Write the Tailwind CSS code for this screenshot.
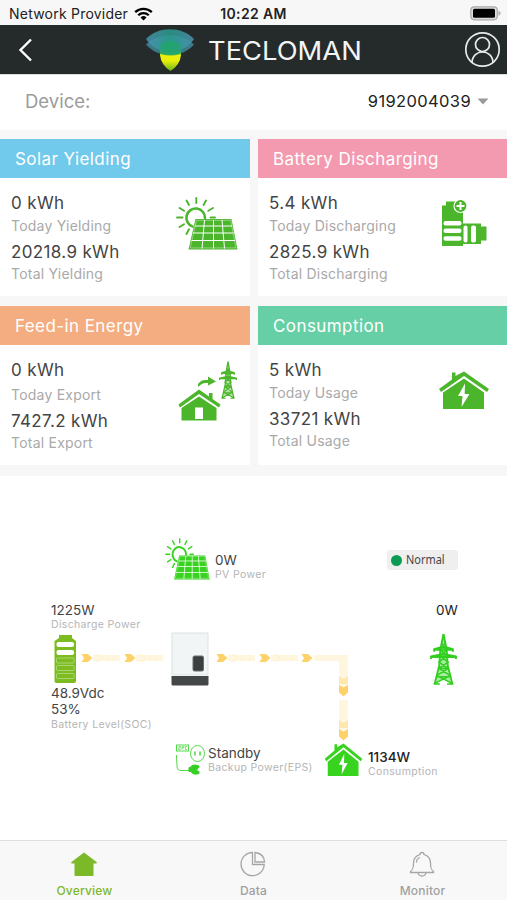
<!DOCTYPE html>
<html lang="en">
<head>
  <meta charset="UTF-8" />
  <meta name="viewport" content="width=device-width, initial-scale=1.0"/>
  <title>Tecloman Overview</title>
  <script src="https://cdn.jsdelivr.net/npm/@tailwindcss/browser@4"></script>
</head>
<body class="w-[507px] h-[900px] overflow-hidden flex flex-col bg-white font-['Inter',sans-serif] text-[#444] whitespace-nowrap">

  <!-- Shared icons -->
  <svg class="hidden">
    <symbol id="solar" viewBox="0 0 62 53" preserveAspectRatio="none">
      <g fill="none" stroke="currentColor" stroke-width="1.9" stroke-linecap="round">
        <path d="M20.300 1v5M10.500 3.500l2.500 4.500M30 3.500l-2.500 4.500M3.500 11l4.500 2.700M37 11l-4.700 2.700M1 20.500h5.500M34.500 20.500h4.500M3.500 30l4.500-2.700M10.500 37l2.500-4.700"/>
        <path d="M16.500 29.500A9.300 9.300 0 1 1 29 21" stroke-width="2.600"/>
      </g>
      <path d="M19.500 22h36l6 30.500H12.500z" fill="currentColor"/>
      <g fill="none" stroke="#fff" stroke-width="1">
        <path d="M20.500 23.300h34.200l5.200 27.600H14.200z" stroke-width=".4"/>
        <path d="M28.500 23L26 51.500M37.500 23v28.500M46 23l2.500 28.500M18.500 29h37.500M17 36h40.500M15.500 43.500H59"/>
      </g>
    </symbol>
    <symbol id="power-house" viewBox="0 0 52 38" preserveAspectRatio="none">
      <path d="M14 7V1.500h3.500V5L26 .5 51 18l-2 3L26 5 3 21l-2-3 13-9.500z" fill="currentColor"/>
      <path d="M26 7.500l20 14V38H5V21.500z" fill="currentColor"/>
      <path d="M27 12.500l-7 12.500h4.500L23.500 36 31.500 23h-4.800z" fill="#fff"/>
    </symbol>
    <symbol id="tower" viewBox="0 0 26 50" preserveAspectRatio="none">
      <path d="M13 3l-3 14v14L5.500 49l7.500-5 7.500 5L16 31V17z" fill="currentColor" opacity=".4"/>
      <g fill="none" stroke="currentColor" stroke-width="1.900" stroke-linejoin="round">
        <path d="M13 1l-3 15-1 15-4.500 18M13 1l3 15 1 15 4.500 18"/>
        <path d="M4 18v-2.500L10 14h6l6 1.500V18M1 25v-2.500L9.500 21h7l8.500 1.500V25M4 16h18M1 23h24"/>
        <path d="M11.500 10l5 6-7 6 8 6-9 6 11 7-14 7M14.500 10l-5 6 7 6-8 6 9 6-11 7 14 7M8 34h10M6 42h14M3.500 49h6M16.500 49h6" stroke-width="1.500"/>
      </g>
    </symbol>
    <symbol id="flow" viewBox="0 0 40 10">
      <path d="M12 2h27v6H12z" fill="#fff6df"/>
      <path d="M14 2h5l2 3-2 3h-5M25 2l2 3-2 3M32 2l2 3-2 3" fill="none" stroke="#fff1cf"/>
      <path d="M.5 1h6.500l4.500 4L7 9H.5L3 5z" fill="#fdd26b"/>
    </symbol>
  </svg>

  <!-- Status bar -->
  <div class="h-[25px] shrink-0 bg-[#f7f7f7] grid grid-cols-3 items-center pl-[9px] pr-[6px] pt-[2px] text-[14px] text-[#222]">
    <div class="flex items-center gap-[6px]">
      <span class="tracking-[0.22px]">Network Provider</span>
      <svg class="w-[19px] h-[14px]" viewBox="0 0 19 14" fill="none" stroke="#000" stroke-width="2.300">
        <path d="M1.200 5.200a12 12 0 0 1 16.600 0M4.200 8.300a7.600 7.600 0 0 1 10.600 0"/>
        <path d="M9.500 13.500L6.500 10.500a4.300 4.300 0 0 1 6 0z" fill="#000" stroke="none"/>
      </svg>
    </div>
    <span class="text-center font-semibold tracking-[0.35px] -ml-[3px]">10:22 AM</span>
    <svg class="justify-self-end w-[31px] h-[15px]" viewBox="0 0 31 15">
      <rect x=".8" y=".8" width="26.500" height="13" rx="3.500" fill="#ddd" stroke="#aaa" stroke-width="1.200"/>
      <rect x="3" y="2.800" width="22" height="9" rx="1.500" fill="#000"/>
      <path d="M28.500 4.500q2 1 2 2.800t-2 2.800z" fill="#aaa"/>
    </svg>
  </div>

  <!-- Header -->
  <header class="h-[49px] shrink-0 bg-[#252a2a] flex items-center pl-[18px] pr-[6px]">
    <svg class="w-[15px] h-[24px]" viewBox="0 0 15 24" fill="none" stroke="#fff" stroke-width="2.400"><path d="M13 1.500L2.500 12 13 22.500"/></svg>
    <svg class="w-[50px] h-[42px] ml-[112px]" viewBox="0 0 50 42">
      <defs>
        <linearGradient id="bulb" x1="0" y1="0" x2="0" y2="1">
          <stop offset="0" stop-color="#35a35a"/><stop offset=".35" stop-color="#48b84a"/><stop offset=".45" stop-color="#eaf20c"/><stop offset=".65" stop-color="#e8ee0a"/><stop offset="1" stop-color="#69b51c"/>
        </linearGradient>
        <linearGradient id="wing" x1="0" x2="1">
          <stop offset="0" stop-color="#4b93b2"/><stop offset=".5" stop-color="#2a9c8e"/><stop offset="1" stop-color="#4b93b2"/>
        </linearGradient>
      </defs>
      <path d="M15 17q10-8 21 0v9q-1 10-10.500 16Q16 36 15 26z" fill="url(#bulb)"/>
      <path d="M1 10C13-3 37-3 49 10c-11 17-37 17-48 0z" fill="url(#wing)" opacity=".85"/>
      <path d="M1 15.500C13 3 37 3 49 15.500c-12 14-36 14-48 0z" fill="url(#wing)" opacity=".75"/>
      <path d="M15.500 16q10-8 20 0v9q-10 3-20 0z" fill="#20a567" opacity=".75"/>
    </svg>
    <h1 class="ml-[13px] mt-[4px] text-[25px] leading-none text-[#f2f5f5] origin-left scale-x-[1.093]">TECLOMAN</h1>
    <svg class="ml-auto w-[37px] h-[37px]" viewBox="0 0 37 37" fill="none" stroke="#e8eaea" stroke-width="1.700">
      <circle cx="18.500" cy="18.500" r="16.700"/><circle cx="18.500" cy="13.500" r="7"/><path d="M8 31.500c.5-14 20.500-14 21 0"/>
    </svg>
  </header>

  <!-- Device picker -->
  <div class="h-[56px] shrink-0 flex items-center pl-[25px] pr-[18px] border-t border-[#ddd]">
    <span class="text-[18.500px] text-[#9b9b9b] -mt-[2px]">Device:</span>
    <span class="ml-auto text-[16.500px] text-[#222] tracking-[0.36px] -mt-[2px]">9192004039</span>
    <svg class="ml-[6px] -mt-[2px] w-[12px] h-[7px]" viewBox="0 0 12 7"><path d="M.5.500h11L6 6.500z" fill="#9a9a9a"/></svg>
  </div>

  <!-- Energy cards -->
  <main class="shrink-0 h-[346px] bg-[#f7f7f7] pt-[9px] grid grid-cols-[250px_249px] grid-rows-[157px_159px] gap-x-[8px] gap-y-[10px] content-start">
    <section class="bg-white">
      <h2 class="h-[39px] flex items-center pt-[2px] pl-[15px] bg-[#71c9eb] text-white text-[17px] tracking-[0.42px]">Solar Yielding</h2>
      <div class="flex justify-between pt-[13px] pl-[11px] pr-[12px]">
        <div>
          <p class="text-[17px] leading-[24px] tracking-[0.35px]">0 kWh</p>
          <p class="text-[14px] leading-[22px] text-[#a9a9a9] tracking-[0.22px]">Today Yielding</p>
          <p class="text-[17px] leading-[24px] tracking-[0.35px] mt-[3px]">20218.9 kWh</p>
          <p class="text-[14px] leading-[20px] text-[#a9a9a9] tracking-[0.22px]">Total Yielding</p>
        </div>
        <svg class="w-[62px] h-[53px] mt-[6px] text-[#4bb52b]"><use href="#solar"/></svg>
      </div>
    </section>

    <section class="bg-white">
      <h2 class="h-[39px] flex items-center pt-[2px] pl-[15px] bg-[#f49ab0] text-white text-[17px] tracking-[0.42px]">Battery Discharging</h2>
      <div class="flex justify-between pt-[13px] pl-[11px] pr-[20px]">
        <div>
          <p class="text-[17px] leading-[24px] tracking-[0.35px]">5.4 kWh</p>
          <p class="text-[14px] leading-[22px] text-[#a9a9a9] tracking-[0.22px]">Today Discharging</p>
          <p class="text-[17px] leading-[24px] tracking-[0.35px] mt-[3px]">2825.9 kWh</p>
          <p class="text-[14px] leading-[20px] text-[#a9a9a9] tracking-[0.22px]">Total Discharging</p>
        </div>
        <svg class="w-[46px] h-[48px] mt-[8px]" viewBox="0 0 46 48">
          <path d="M1 6.500h4v-4h13v4h4V47H1zM22 24.500h18v3h5.500v14H40v3.500H22z" fill="#4bb52b"/>
          <rect x="2.500" y="22" width="18" height="4.500" rx="2" fill="#fff"/>
          <rect x="2.500" y="29.500" width="18" height="4.500" rx="2" fill="#fff"/>
          <rect x="2.500" y="37.300" width="18" height="4.500" rx="2" fill="#fff"/>
          <rect x="22.500" y="26.500" width="4" height="17" rx="2" fill="#fff"/>
          <rect x="30" y="26.500" width="5" height="17" rx="2" fill="#fff"/>
          <circle cx="19.500" cy="7" r="6.500" fill="#4bb52b" stroke="#fff" stroke-width="1.200"/>
          <path d="M19.500 3v8M15.500 7h8" stroke="#fff" stroke-width="2"/>
        </svg>
      </div>
    </section>

    <section class="bg-white">
      <h2 class="h-[39px] flex items-center pt-[2px] pl-[15px] bg-[#f3ad80] text-white text-[17px] tracking-[0.42px]">Feed-in Energy</h2>
      <div class="flex justify-between pt-[13px] pl-[11px] pr-[13px]">
        <div>
          <p class="text-[17px] leading-[24px] tracking-[0.35px]">0 kWh</p>
          <p class="text-[14px] leading-[22px] mt-[2px] text-[#a9a9a9] tracking-[0.22px]">Today Export</p>
          <p class="text-[17px] leading-[24px] tracking-[0.35px] mt-[3px]">7427.2 kWh</p>
          <p class="text-[14px] leading-[20px] text-[#a9a9a9] tracking-[0.22px]">Total Export</p>
        </div>
        <svg class="w-[59px] h-[60px] mt-[3px] text-[#4bb52b]" viewBox="0 0 59 60">
          <use href="#tower" x="41" y="0" width="18" height="38"/>
          <path d="M20 26v-3q3-4 7-4h3v-3.500l8 5-8 4V22h-4q-3 1-6 4z" fill="currentColor"/>
          <path d="M21 28.500l10 7V32h3.500v6l8 5.500-1.500 3L21 33 2 46.500.5 43.500z" fill="currentColor"/>
          <path d="M21 35.500l17.500 11.500v12.500h-35V47z" fill="currentColor"/>
          <path d="M17 46.500h8v11.500h-8z" fill="#fff"/>
        </svg>
      </div>
    </section>

    <section class="bg-white">
      <h2 class="h-[39px] flex items-center pt-[2px] pl-[15px] bg-[#66cfa6] text-white text-[17px] tracking-[0.42px]">Consumption</h2>
      <div class="flex justify-between pt-[13px] pl-[11px] pr-[17px]">
        <div>
          <p class="text-[17px] leading-[24px] tracking-[0.35px]">5 kWh</p>
          <p class="text-[14px] leading-[22px] text-[#a9a9a9] tracking-[0.22px]">Today Usage</p>
          <p class="text-[17px] leading-[24px] tracking-[0.35px] mt-[3px]">33721 kWh</p>
          <p class="text-[14px] leading-[20px] text-[#a9a9a9] tracking-[0.22px]">Total Usage</p>
        </div>
        <svg class="w-[52px] h-[38px] mt-[13px] text-[#4bb52b]"><use href="#power-house"/></svg>
      </div>
    </section>
  </main>

  <!-- Power flow diagram -->
  <div class="relative h-[364px] shrink-0">
    <svg class="absolute left-[165px] top-[62px] w-[45px] h-[42px] text-[#37d31f]"><use href="#solar"/></svg>
    <div class="absolute left-[215px] top-[76px]">
      <p class="text-[13.500px] leading-[16px]">0W</p>
      <p class="text-[10.500px] leading-[14px] text-[#b5b5b5] tracking-[0.35px]">PV Power</p>
    </div>

    <div class="absolute left-[387px] top-[74px] w-[71px] h-[20px] rounded-[3px] bg-[#efefef] flex items-center gap-[4px] pl-[4px] font-['Noto_Sans',sans-serif] text-[12px] text-[#444]">
      <span class="w-[11px] h-[11px] rounded-full bg-[#0a9c55]"></span>
      <span class="origin-left scale-x-[0.91]">Normal</span>
    </div>

    <div class="absolute left-[51px] top-[126px]">
      <p class="text-[13.500px] leading-[16px]">1225W</p>
      <p class="text-[10.500px] leading-[14px] text-[#b5b5b5] tracking-[0.35px]">Discharge Power</p>
    </div>
    <svg class="absolute left-[54px] top-[158px] w-[23px] h-[50px]" viewBox="0 0 23 50">
      <path d="M5 1h13v3l4 3v40q0 2-2 2H2.500q-2 0-2-2V7L5 4z" fill="#7cbc20"/>
      <rect x="2.500" y="8" width="17.500" height="5" rx="2" fill="#fff"/>
      <rect x="2.500" y="16" width="17.500" height="5" rx="2" fill="#fff"/>
      <g fill="none" stroke="#b9dc86" stroke-width=".8"><rect x="2.500" y="24" width="17.500" height="5" rx="1"/><rect x="2.500" y="31.500" width="17.500" height="5" rx="1"/><rect x="2.500" y="39.500" width="17.500" height="5" rx="1"/></g>
    </svg>
    <div class="absolute left-[51px] top-[209px]">
      <p class="text-[13.500px] leading-[16px]">48.9Vdc</p>
      <p class="text-[13.500px] leading-[16px]">53%</p>
      <p class="text-[10.500px] leading-[15px] text-[#b5b5b5] tracking-[0.35px]">Battery Level(SOC)</p>
    </div>

    <svg class="absolute left-[81px] top-[156px] w-[270px] h-[112px]" viewBox="0 0 270 112">
      <use href="#flow" x="0" y="21" width="40" height="10"/>
      <use href="#flow" x="43" y="21" width="40" height="10"/>
      <use href="#flow" x="135" y="21" width="40" height="10"/>
      <use href="#flow" x="178" y="21" width="40" height="10"/>
      <path d="M233 23h34v33h-9V29h-25z" fill="#fff6df"/>
      <path d="M220.500 22h6.500l4.500 4-4.500 4h-6.500l2.500-4z" fill="#fdd26b"/>
      <path d="M258 68h9v30h-9z" fill="#fff6df"/>
      <path d="M258 44l4.500 3 4.500-3v8h-9zM258 88l4.500 3 4.500-3v8h-9z" fill="#ffe8ad"/>
      <path d="M258 53l4.500 2.500L267 53v7.500l-4.500 4-4.500-4zM258 97l4.500 2.500L267 97v7.500l-4.500 4-4.500-4z" fill="#fdd26b"/>
      <!-- inverter -->
      <path d="M91 1h36v42H91z" fill="#f1f5f6" stroke="#dbe1e2"/>
      <path d="M90.500 44h37v8q0 1.500-1.500 1.500H92q-1.500 0-1.500-1.500z" fill="#444748"/>
      <rect x="112" y="24" width="10.500" height="15" rx="1.500" fill="#3c3f40" stroke="#686c6d"/>
    </svg>

    <p class="absolute left-[436px] top-[126px] text-[13.500px] leading-[16px] text-[#222]">0W</p>
    <svg class="absolute left-[430px] top-[157px] w-[27px] h-[52px] text-[#32cf20]"><use href="#tower"/></svg>

    <svg class="absolute left-[175px] top-[268px] w-[32px] h-[32px]" viewBox="0 0 32 32" fill="none" stroke="#55d74a" stroke-width="1">
      <rect x="1.500" y="1" width="12" height="6"/>
      <path d="M3.500 2.500h2v1.500h-2v1.500h2M7 5.500v-3h2v1.500H7M12 2.500h-1.500v3H12" stroke-width=".7"/>
      <ellipse cx="22.500" cy="9.500" rx="7" ry="8"/>
      <path d="M20 7.500v4M25 7.500v4" stroke-width="1.600"/>
      <path d="M1.500 11v2l.5 9q0 4.500 4 4.500h8"/>
      <path d="M24 22q-7-2.500-8.500 1.500H14v4h2q2 4 8 2v-2l-2-.5q-1-3 2-3.500z" fill="#35cf25" stroke="#35cf25"/>
    </svg>
    <div class="absolute left-[208px] top-[269px]">
      <p class="text-[13.500px] leading-[16px]">Standby</p>
      <p class="text-[10.500px] leading-[14px] text-[#b5b5b5] tracking-[0.35px]">Backup Power(EPS)</p>
    </div>

    <svg class="absolute left-[324px] top-[267px] w-[39px] h-[33px] text-[#37d31f]"><use href="#power-house"/></svg>
    <div class="absolute left-[368px] top-[273px]">
      <p class="text-[13.500px] leading-[16px] text-[#222] font-medium">1134W</p>
      <p class="text-[10.500px] leading-[14px] text-[#b5b5b5] tracking-[0.35px]">Consumption</p>
    </div>
  </div>

  <!-- Tab bar -->
  <nav class="h-[61px] shrink-0 border-t border-[#dedede] bg-[#f8f8f8] grid grid-cols-3 justify-items-center text-[12px] font-medium tracking-[0.2px] text-[#a0a0a0]">
    <div class="flex flex-col items-center pt-[10px]">
      <svg class="w-[28px] h-[26px]" viewBox="0 0 28 26"><path d="M14 1.500L26.500 11q1 1.500-.5 1.500h-2.500V24q0 1-1 1H5.500q-1 0-1-1V12.500H2Q.5 12.500 1.500 11z" fill="#7cb928"/></svg>
      <span class="mt-[5px] text-[#7cb928]">Overview</span>
    </div>
    <div class="flex flex-col items-center pt-[10px]">
      <svg class="w-[26px] h-[26px]" viewBox="0 0 26 26" fill="none" stroke="#a6a6a6" stroke-width="1.300">
        <path d="M12.500 1.500a11.600 11.600 0 1 0 11.700 12H12.500zM15 1.500v9.500h9.500q-.5-8.500-9.500-9.500z"/>
      </svg>
      <span class="mt-[5px]">Data</span>
    </div>
    <div class="flex flex-col items-center pt-[10px]">
      <svg class="w-[26px] h-[26px]" viewBox="0 0 26 26" fill="none" stroke="#a6a6a6" stroke-width="1.300">
        <path d="M13 1.500q-2 0-2 2Q4.500 5.500 4.500 12c0 5-.5 6.500-3 8.500v1h23v-1c-2.500-2-3-3.500-3-8.500q0-6.500-6.500-8.500 0-2-2-2zM9 21.500q.5 3.500 4 3.500t4-3.500M7.500 11.500q0-4 3.500-5"/>
      </svg>
      <span class="mt-[5px]">Monitor</span>
    </div>
  </nav>
</body>
</html>
